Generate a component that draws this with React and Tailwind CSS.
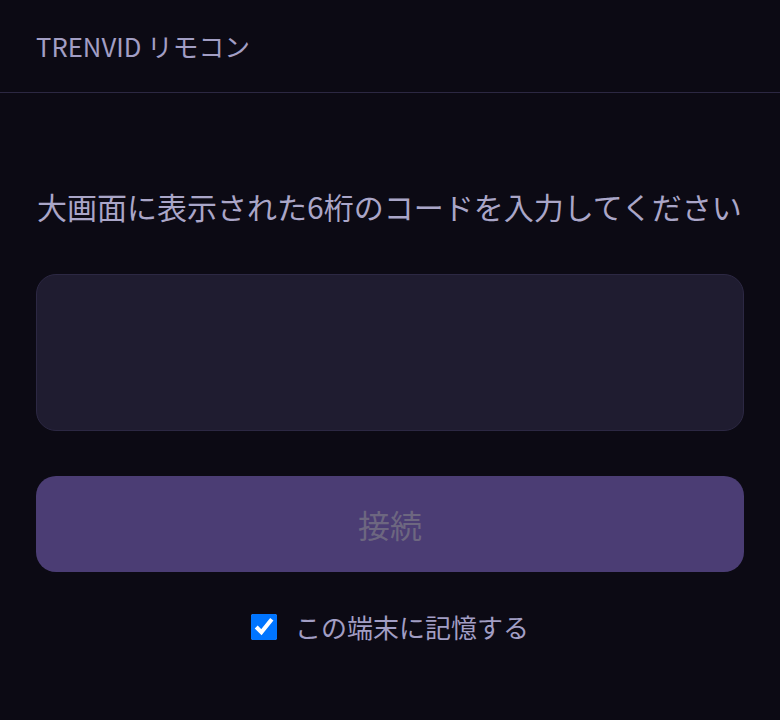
import React from "react";

export default function App() {
  return (
    <div
      className="min-h-[720px] w-full bg-[#0c0a14]"
      style={{ fontFamily: '"Noto Sans CJK JP", "Noto Sans", sans-serif' }}
    >
      <header className="h-[93px] flex items-center px-9 border-b border-[#2c2842]">
        <h1 className="text-[25.7px] leading-[36px] text-[#a29ec4] font-normal tracking-normal">
          TRENVID リモコン
        </h1>
      </header>
      <main className="px-9 pt-[91px]">
        <p className="text-[30px] leading-[45px] text-[#aaa6c8] whitespace-nowrap pl-px">
          大画面に表示された6桁のコードを入力してください
        </p>
        <input
          type="text"
          inputMode="numeric"
          maxLength={6}
          className="mt-[45px] block w-full h-[157px] rounded-[20px] bg-[#1f1c30] border border-[#2c2843] outline-none text-center text-[48px] text-[#c8c4e0]"
        />
        <button
          disabled
          className="mt-[45px] block w-full h-[96px] rounded-[20px] bg-[#4b3d74] text-[32px] text-[#6d6780]"
        >
          接続
        </button>
        <label className="mt-[37px] flex items-center justify-center gap-[18px]">
          <input
            type="checkbox"
            defaultChecked
            className="w-[26px] h-[26px] m-0"
          />
          <span className="text-[26px] leading-[36px] text-[#a29ec4]">この端末に記憶する</span>
        </label>
      </main>
    </div>
  );
}
